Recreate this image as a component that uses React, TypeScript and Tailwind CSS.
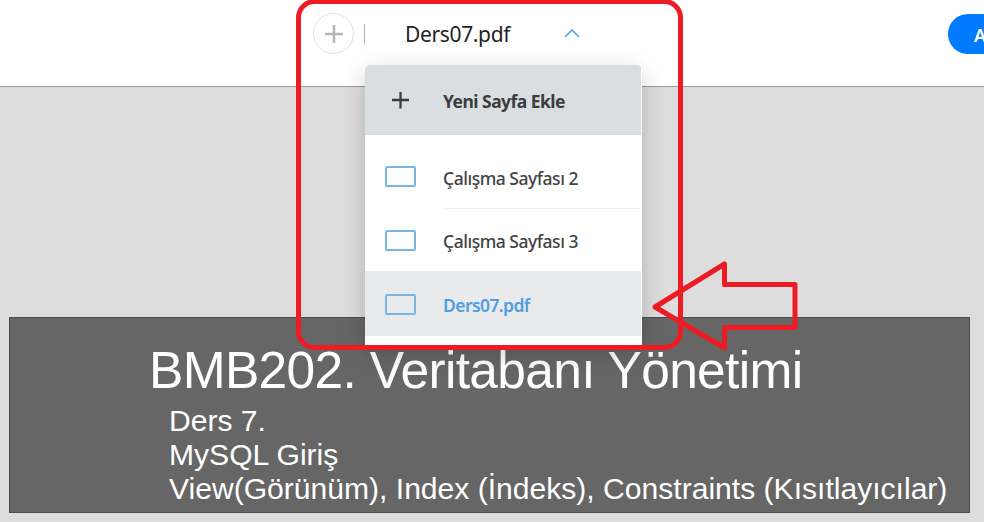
import React from "react";

const pages = [
  { name: "Çalışma Sayfası 2", row: "h-[74px] pt-[9px] relative" },
  { name: "Çalışma Sayfası 3", row: "h-[62px]" },
];

function SheetIcon() {
  return <span className="ml-[20px] h-[21px] w-[31px] shrink-0 rounded-[2px] border-2 border-[#78b4e5]" />;
}

function PageMenu() {
  return (
    <div className="absolute left-[365px] top-[65px] h-[280px] w-[277px] overflow-hidden rounded-t-[5px] bg-white pr-px font-['Noto_Sans','Open_Sans',sans-serif] text-[17.5px] shadow-[0_8px_24px_rgba(0,0,0,0.2)]">
      <div className="flex h-[70px] items-center bg-[#d9dee2]">
        <svg className="ml-[27px] shrink-0" width="17" height="17" viewBox="0 0 17 17" stroke="#3c3c3c" strokeWidth="2.3">
          <path d="M8.5 0v17M0 8.5h17" transform="translate(0 -.5)" />
        </svg>
        <span className="ml-[34px] mt-[3px] whitespace-nowrap font-bold tracking-[-0.53px] text-[#3c3c3c]">Yeni Sayfa Ekle</span>
      </div>
      {pages.map((p, i) => (
        <div key={p.name} className={`flex items-center ${p.row}`}>
          <SheetIcon />
          <span className="ml-[27px] mt-[3px] whitespace-nowrap font-medium tracking-[-0.48px] text-[#444]">{p.name}</span>
          {i === 0 && <span className="absolute bottom-0 left-[78px] right-0 h-px bg-[#eee]" />}
        </div>
      ))}
      <div className="flex h-[65px] items-center bg-[#e8eaeb] pt-px">
        <SheetIcon />
        <span className="ml-[27px] mt-[2px] whitespace-nowrap font-semibold tracking-[-0.58px] text-[#4e9de3]">Ders07.pdf</span>
      </div>
    </div>
  );
}

export default function App() {
  return (
    <main className="relative flex h-[522px] w-[984px] flex-col overflow-hidden bg-[#dddddd]">
      <header className="flex h-[87px] shrink-0 items-start border-b border-[#999] bg-white pt-[13px]">
        <div className="ml-[313px] flex h-[41px] w-[41px] items-center justify-center rounded-full border border-[#e1e1e1]">
          <svg width="18" height="18" viewBox="0 0 18 18" stroke="#b4b4b4" strokeWidth="2.5">
            <path d="M9 0v18M0 9h18" />
          </svg>
        </div>
        <span className="ml-[10px] mt-[11px] h-[20px] w-px bg-[#b0b0b0]" />
        <span className="ml-[40px] mt-[5px] w-[110px] whitespace-nowrap font-['Noto_Sans','Open_Sans',sans-serif] text-[21px] leading-[32px] tracking-[-0.35px] text-[#222]">Ders07.pdf</span>
        <svg className="ml-[49px] mt-[16px]" width="16" height="9" viewBox="0 0 16 9" fill="none" stroke="#4c9fe0" strokeWidth="1.5">
          <path d="M1 8 8 1l7 7" />
        </svg>
        <button className="ml-auto mt-px h-[40px] w-[36px] overflow-hidden rounded-l-full bg-[#007bff] pl-[26px] pt-[2px] text-left font-['Noto_Sans',sans-serif] text-[18px] font-semibold text-white">A</button>
      </header>
      <section className="ml-[9px] mt-[230px] h-[196px] w-[961px] shrink-0 border border-[#4d4d4d] bg-[#666] font-['Liberation_Sans',Arial,sans-serif] text-white">
        <h1 className="ml-[139px] mt-[22px] whitespace-nowrap text-[51.5px] leading-[60px] tracking-[-0.68px]">BMB202. Veritabanı Yönetimi</h1>
        <div className="ml-[159px] mt-[4px] whitespace-nowrap text-[30.08px] leading-[34px]">
          <p>Ders 7.</p>
          <p>MySQL Giriş</p>
          <p>View(Görünüm), Index (İndeks), Constraints (Kısıtlayıcılar)</p>
        </div>
      </section>
      <PageMenu />
      <svg className="pointer-events-none absolute left-0 top-0" width="984" height="522" fill="none" stroke="#ed1c24" strokeWidth="5">
        <rect x="298.5" y="1.5" width="382" height="346" rx="16" />
        <path d="M655 307 724.5 264V284.5H795V327.5H724.5V348Z" strokeLinejoin="round" />
      </svg>
    </main>
  );
}
